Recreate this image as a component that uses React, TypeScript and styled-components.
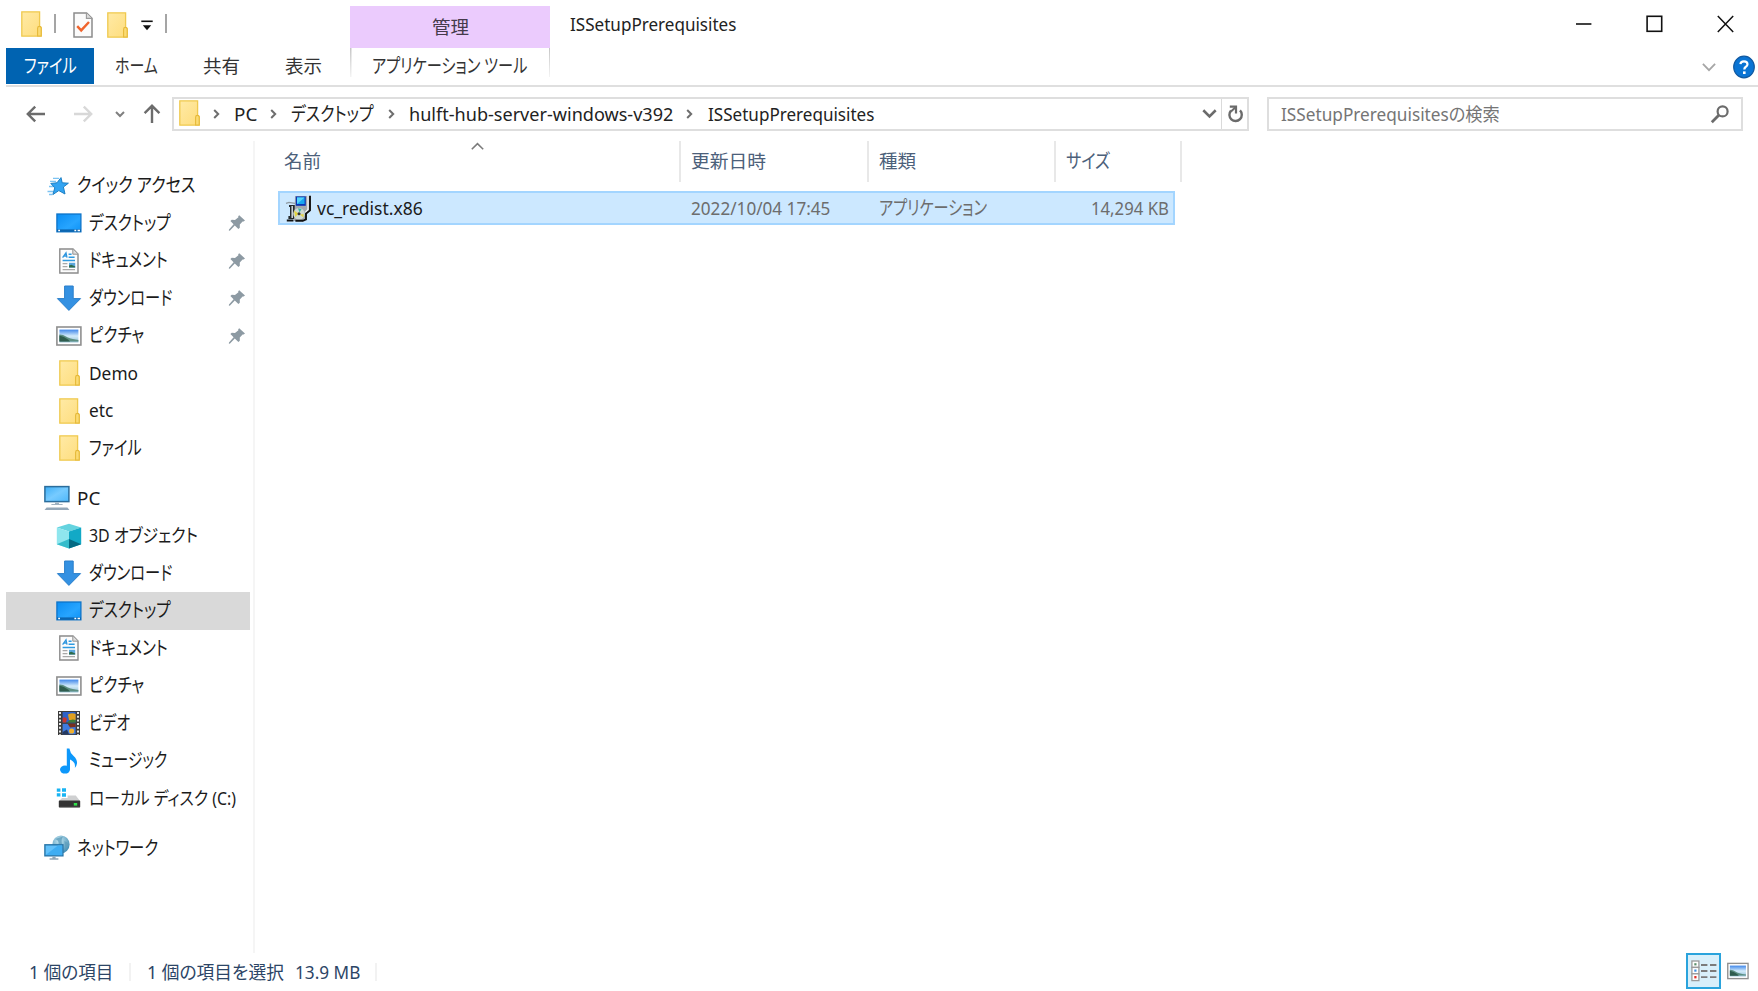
import React, { useLayoutEffect, useRef, useState } from "react";
import styled, { createGlobalStyle, css } from "styled-components";

const GlobalStyle = createGlobalStyle`
  * { box-sizing: border-box; }
  html, body { margin: 0; padding: 0; background: #fff; overflow: hidden; }
  body {
    font-family: "Noto Sans", "Noto Sans CJK JP", sans-serif;
    font-size: 18px;
    font-feature-settings: "palt" 1;
    color: #1b1b1b;
  }
  svg { display: block; flex: none; }
`;

/* ---------- text condensed to a UI-font width ---------- */

const LabelBox = styled.span<{ $w: number; $size: number; $color?: string }>`
  display: inline-block;
  flex: none;
  width: ${(p) => p.$w}px;
  height: 26px;
  line-height: 26px;
  font-size: ${(p) => p.$size}px;
  white-space: pre;
  color: ${(p) => p.$color ?? "inherit"};
`;
const LabelInk = styled.span`
  display: inline-block;
  transform-origin: 0 50%;
`;

/* Katakana-only labels are set taller, as narrow UI kana are. */
const KATAKANA = /^[\u30a0-\u30ff ]+$/;

function Label({ text, w, color }: { text: string; w: number; color?: string }) {
  const ref = useRef<HTMLSpanElement>(null);
  const [scale, setScale] = useState(1);
  useLayoutEffect(() => {
    if (ref.current) setScale(w / ref.current.offsetWidth);
  }, [text, w]);
  return (
    <LabelBox $w={w} $size={KATAKANA.test(text) ? 19.5 : 18} $color={color}>
      <LabelInk ref={ref} style={{ transform: `scaleX(${scale})` }}>{text}</LabelInk>
    </LabelBox>
  );
}

/* ---------- icons ---------- */

const FolderIcon = () => (
  <svg width="21" height="26" viewBox="0 0 21 26">
    <defs>
      <linearGradient id="folder" x1="0" y1="0" x2="1" y2="1">
        <stop offset="0" stopColor="#ffeaa6" />
        <stop offset="1" stopColor="#fedd7c" />
      </linearGradient>
    </defs>
    <path d="M.8.8H18.6V15.2L20.2 16.6V25.2H.8Z" fill="url(#folder)" stroke="#efc94f" strokeWidth="1.3" />
    <path d="M16.6 25V17.2Q16.6 15.4 18.4 15.4T20.2 17.2V25Z" fill="#fbdb74" stroke="#e6b93a" strokeWidth="1.1" />
  </svg>
);

const PropertiesIcon = () => (
  <svg width="20" height="26" viewBox="0 0 20 26">
    <path d="M1 1H13.6L19 6.2V25H1Z" fill="#fbfbfb" stroke="#8c8c8c" strokeWidth="1.5" />
    <path d="M13.4 1V6.4H19" fill="#dcdcdc" stroke="#9a9a9a" strokeWidth="1.1" />
    <path d="M4.2 14.2L8.2 18.4L16 10" fill="none" stroke="#f0642d" strokeWidth="2.4" />
  </svg>
);

const CustomizeIcon = () => (
  <svg width="12" height="11" viewBox="0 0 12 11">
    <path d="M.3 1.3H11.7" stroke="#111" strokeWidth="1.6" />
    <path d="M1.8 5.2H10.2L6 10.2Z" fill="#111" />
  </svg>
);

const MinimizeIcon = () => (
  <svg width="17" height="18" viewBox="0 0 17 18"><path d="M1 9H16.4" stroke="#111" strokeWidth="1.6" /></svg>
);
const MaximizeIcon = () => (
  <svg width="17" height="18" viewBox="0 0 17 18"><rect x="1.1" y="1.3" width="14.6" height="15" fill="none" stroke="#111" strokeWidth="1.6" /></svg>
);
const CloseIcon = () => (
  <svg width="17" height="18" viewBox="0 0 17 18"><path d="M.8 1L16.2 17M16.2 1L.8 17" stroke="#111" strokeWidth="1.5" /></svg>
);

const ChevronIcon = ({ w, h, color, sw }: { w: number; h: number; color: string; sw: number }) => (
  <svg width={w} height={h} viewBox={`0 0 ${w} ${h}`}>
    <path d={`M${sw / 2} ${sw / 2}L${w / 2} ${h - sw}L${w - sw / 2} ${sw / 2}`} fill="none" stroke={color} strokeWidth={sw} />
  </svg>
);

const CrumbChevron = () => (
  <svg width="8" height="12" viewBox="0 0 8 12"><path d="M1.2 2L5.2 6L1.2 10" fill="none" stroke="#6e6e6e" strokeWidth="2" /></svg>
);

const HelpIcon = () => (
  <svg width="22" height="24" viewBox="0 0 22 24">
    <ellipse cx="11" cy="12" rx="10.3" ry="10.8" fill="#0a74d4" stroke="#1159a0" strokeWidth="1.2" />
    <path d="M7.4 9.2Q7.6 6.3 11 6.3T14.5 9.2Q14.5 10.8 12.6 12Q11.3 12.9 11.3 14.6" fill="none" stroke="#fff" strokeWidth="2.2" />
    <rect x="10" y="16.4" width="2.6" height="2.6" fill="#fff" />
  </svg>
);

const ArrowIcon = ({ dir, color }: { dir: "left" | "right" | "up"; color: string }) => (
  <svg width="20" height="20" viewBox="0 0 20 20">
    <g transform={`rotate(${{ left: 0, up: 90, right: 180 }[dir]} 10 10)`}>
      <path d="M1.8 10H19M9.2 2.6L1.8 10L9.2 17.4" fill="none" stroke={color} strokeWidth="2.4" />
    </g>
  </svg>
);

const RefreshIcon = () => (
  <svg width="17" height="20" viewBox="0 0 17 20">
    <path d="M13 6.4A6.2 6.2 0 1 1 4 6.6" fill="none" stroke="#6b6b6b" strokeWidth="2.4" />
    <path d="M2.8 2.6H9V9.4" fill="none" stroke="#6b6b6b" strokeWidth="2.2" />
    <path d="M4 7.4L8.8 3" stroke="#6b6b6b" strokeWidth="2" />
  </svg>
);

const SearchIcon = () => (
  <svg width="20" height="20" viewBox="0 0 20 20">
    <circle cx="12.6" cy="7.4" r="5" fill="none" stroke="#6b6b6b" strokeWidth="2.2" />
    <path d="M9 11L1.8 18.2" stroke="#6b6b6b" strokeWidth="2.8" />
  </svg>
);

const StarIcon = () => (
  <svg width="26" height="26" viewBox="0 0 26 26">
    <path d="M9 5.4H15M6 8.4H12M5 13.5H10M3.5 18.5H9M5 21.5H8" stroke="#7cc3f2" strokeWidth="1.3" />
    <path d="M17 4.6L18.2 9.8L24.4 10.2L19.4 14L21 21L14.8 17.6L8.8 21.6L10.8 14.8L6.8 10.4L13 9.8Z" fill="#32a4f2" stroke="#1c7fc4" strokeWidth="1" />
  </svg>
);

const DesktopIcon = () => (
  <svg width="26" height="26" viewBox="0 0 26 26">
    <defs>
      <linearGradient id="desk" x1="0" y1="0" x2="1" y2="1">
        <stop offset="0" stopColor="#0b8df2" />
        <stop offset=".6" stopColor="#27a5ff" />
        <stop offset="1" stopColor="#0c91f5" />
      </linearGradient>
    </defs>
    <rect x=".9" y="4" width="24" height="17.8" fill="url(#desk)" stroke="#0f74c8" strokeWidth="1.3" />
    <rect x="1" y="19.4" width="24" height="2.4" fill="#0c66b0" />
    <path d="M2.2 20.6H4M18.4 20.6H20.2M21.6 20.6H24" stroke="#fff" strokeWidth="1.5" />
  </svg>
);

const DocumentIcon = () => (
  <svg width="26" height="26" viewBox="0 0 26 26">
    <path d="M3.8 1H17L22 6V25H3.8Z" fill="#fcfcfc" stroke="#8b8b8b" strokeWidth="1.4" />
    <path d="M16.8 1V6.2H22" fill="#dedede" stroke="#949494" strokeWidth="1" />
    <path d="M6.6 9.6L10 4.8L11 9.6M8 8H11" fill="none" stroke="#2f96de" strokeWidth="1.3" />
    <path d="M12.6 6.2H15.6M12.6 9.2H18.6M6.6 12.4H19" stroke="#2f9ae0" strokeWidth="1.5" />
    <path d="M6.6 15.6H11.4M6.6 18.6H11.4M6.6 21.6H19" stroke="#a8a8a8" strokeWidth="1.2" />
    <rect x="13" y="14.8" width="6.2" height="4.8" fill="#5aa6dc" />
    <path d="M13 19.6V17.4L15.4 16.8L19.2 18.4V19.6Z" fill="#2f6b4a" />
  </svg>
);

const DownloadIcon = () => (
  <svg width="26" height="26" viewBox="0 0 26 26">
    <path d="M8.6 1H17.2V13.6H24.6L12.9 25.4L1.4 13.6H8.6Z" fill="#3491e2" stroke="#2b7fcb" strokeWidth="1" />
  </svg>
);

const PictureIcon = ({ w = 26, h = 26 }: { w?: number; h?: number }) => (
  <svg width={w} height={h} viewBox="0 3 26 20" preserveAspectRatio="xMidYMid meet">
    <defs>
      <linearGradient id="sky" x1="0" y1="0" x2="0" y2="1">
        <stop offset="0" stopColor="#3f86ea" />
        <stop offset=".5" stopColor="#d3ebfa" />
        <stop offset="1" stopColor="#8fbdd6" />
      </linearGradient>
    </defs>
    <rect x=".9" y="4" width="24" height="18" fill="#fff" stroke="#8f8f8f" strokeWidth="1.6" />
    <rect x="3.4" y="6.6" width="19" height="12.8" fill="url(#sky)" />
    <path d="M3.4 11.4Q7 11.2 10 13.6T22.4 17V18.4H3.4Z" fill="#5d8f82" />
    <path d="M3.4 12.6Q8 13.6 12 16.6L14 18.6H3.4Z" fill="#2f5c4e" />
  </svg>
);

const ComputerIcon = () => (
  <svg width="26" height="26" viewBox="0 0 26 26">
    <defs>
      <linearGradient id="screen" x1="0" y1="0" x2="1" y2="1">
        <stop offset="0" stopColor="#3daef6" />
        <stop offset=".5" stopColor="#77cbff" />
        <stop offset="1" stopColor="#4db7fa" />
      </linearGradient>
    </defs>
    <rect x=".9" y="1.6" width="24" height="15" fill="url(#screen)" stroke="#2b6d9c" strokeWidth="1.5" />
    <path d="M11 17.4H15V19H18.6V20H7.4V19H11Z" fill="#9fb1bf" />
    <path d="M2.6 22.4H23.4L25.4 25H.6Z" fill="#94a7b8" />
  </svg>
);

const CubeIcon = () => (
  <svg width="26" height="26" viewBox="0 0 26 26">
    <path d="M13 .8L25.2 4.6L13 8.6L.8 4.6Z" fill="#64d3df" />
    <path d="M.8 4.6L13 8.6V25.4L.8 21.2Z" fill="#8fe6ee" />
    <path d="M.8 21.2L13 16V25.4Z" fill="#35bccb" />
    <path d="M25.2 4.6L13 8.6V25.4L25.2 21.2Z" fill="#12a9c6" />
    <path d="M25.2 21.2L13 16V25.4Z" fill="#046a83" />
  </svg>
);

const VideoIcon = () => (
  <svg width="26" height="26" viewBox="0 0 26 26">
    <rect x="2" y="1" width="22" height="24" fill="#3c3c3c" />
    <path d="M4 2V25M22 2V25" stroke="#e8e8e8" strokeWidth="2" strokeDasharray="2 1.7" />
    <rect x="6.6" y="2" width="13" height="10.4" fill="#2f62c8" />
    <rect x="6.6" y="13.8" width="13" height="10.4" fill="#3f7be0" />
    <path d="M6.6 8Q9 6 11 9L10 12.4H6.6Z" fill="#c8362e" />
    <path d="M12 4.6Q16 2 19.6 4V10H13Z" fill="#e0a020" />
    <path d="M11 12.4Q15 8 19.6 10V12.4Z" fill="#3e7c35" />
    <path d="M11.6 13.8H19.6V17L14 17.4Z" fill="#7a2e1c" />
    <circle cx="15.6" cy="21" r="2.6" fill="#f0b030" />
    <path d="M6.6 22L11 19.6L13 24.2H6.6Z" fill="#243a63" />
  </svg>
);

const MusicIcon = () => (
  <svg width="26" height="26" viewBox="0 0 26 26">
    <ellipse cx="9" cy="21.6" rx="5" ry="4" fill="#0d98fb" />
    <path d="M10.8 .6H13.4Q14 5 17.6 8Q21.4 11.4 21 15.6Q20.6 18.4 18.8 20Q19.6 15.6 17 13.4Q15.4 11.8 14 11.4V21.6H10.8Z" fill="#0d98fb" />
  </svg>
);

const DriveIcon = () => (
  <svg width="26" height="26" viewBox="0 0 26 26">
    <path d="M.8 3.4H4.4V6.8H.8ZM6 3.2H10V6.8H6ZM.8 8.2H4.4V11.6H.8ZM6 8.2H10V11.8H6Z" fill="#18b4f3" />
    <path d="M11.6 10.4H19.8L24 16H3L6 13H11.6Z" fill="#cfd0d1" />
    <rect x="2.8" y="15.6" width="21.4" height="7" rx=".8" fill="#333" />
    <path d="M3.6 22.4H23.6" stroke="#8b8b8b" />
    <rect x="17.8" y="18" width="3.4" height="2.6" fill="#31e24b" />
  </svg>
);

const NetworkIcon = () => (
  <svg width="26" height="26" viewBox="0 0 26 26">
    <defs>
      <radialGradient id="globe" cx=".4" cy=".3" r=".8">
        <stop offset="0" stopColor="#c3e6f2" />
        <stop offset="1" stopColor="#3482ab" />
      </radialGradient>
    </defs>
    <ellipse cx="17" cy="9.4" rx="8.6" ry="9" fill="url(#globe)" />
    <path d="M11 4Q15 5 14.6 9H18Q17 4 19 1.4M20.4 6Q24 7 25 10L21 15Z" fill="#5f9dbb" opacity=".8" />
    <rect x=".9" y="9.8" width="18" height="11" fill="#62c1fa" stroke="#2775a8" strokeWidth="1.4" />
    <path d="M1.6 20L14 10.4H18.2V20.2Z" fill="#3fadf2" />
    <path d="M8.4 21.4H11.6V23.2H14.4V24.8H5.6V23.2H8.4Z" fill="#90a5b5" />
  </svg>
);

const PinIcon = () => (
  <svg width="18" height="18" viewBox="0 0 18 18">
    <path d="M11.2 1.2L17 6.4L15.6 7.6L14.6 7.4L11.8 10.6L11.8 13.8L10.4 15L6.8 11.4L1.8 16.8L.8 16.6L1 15.4L5.6 10.2L2.4 7L3.8 5.8L7 6L10.4 3.2L10.2 2.2Z" fill="#8d9aa3" />
  </svg>
);

const InstallerIcon = () => (
  <svg width="27" height="27" viewBox="0 0 27 27">
    <path d="M1 8.4L4 7.4L10 8.4" fill="none" stroke="#8f9aa2" strokeWidth="1.4" />
    <path d="M4 10H11V24H3.4V21H5V12H4Z" fill="#23282b" />
    <path d="M7.2 11V23" stroke="#cfd8de" strokeWidth="1.5" />
    <path d="M10 1H25.4V16L21 20V24.6L18 26H8.4L9.4 22Z" fill="#a3a9ae" />
    <rect x="10.8" y="1.4" width="10" height="9.4" fill="#0b35b5" />
    <path d="M12 2.4H19.6V9H12Z" fill="#18a6f0" />
    <path d="M12 9L19.6 2.4H12Z" fill="#54d4fb" />
    <path d="M23 1V14.6L20.4 17.4" fill="none" stroke="#f2f4f5" strokeWidth="1.4" />
    <path d="M25 .8V15.4L21 18.6V24.4L17.6 26" fill="none" stroke="#111" strokeWidth="1.9" />
    <ellipse cx="14" cy="18.8" rx="5.8" ry="5.8" fill="#cfd8d2" />
    <path d="M9 15.6L13.4 18.6L10.4 22Z" fill="#e3d43e" />
    <path d="M14.6 19.4L18.6 19V22.4Z" fill="#e3d24a" />
    <path d="M13 13.2L16.6 14L14.6 17.4Z" fill="#36b9a5" />
    <circle cx="14" cy="18.8" r="1.5" fill="#333" />
    <path d="M1.8 25.4H8.4M10.4 25.8H18" stroke="#111" strokeWidth="2" />
  </svg>
);

const DetailsIcon = () => (
  <svg width="26" height="22" viewBox="0 0 26 22">
    <g fill="#fff" stroke="#9a9a9a" strokeWidth="1.3">
      <rect x=".9" y="1" width="7" height="6.4" />
      <rect x=".9" y="7.4" width="7" height="6.4" />
      <rect x=".9" y="13.8" width="7" height="6.8" />
    </g>
    <rect x="3.3" y="3.2" width="2.2" height="2.2" fill="#5a8f6c" />
    <rect x="3.3" y="9.5" width="2.2" height="2.2" fill="#3a8ee0" />
    <rect x="3.3" y="16" width="2.2" height="2.4" fill="#e02f26" />
    <path d="M10 5H16.4M19 5H25.4M10 11H16.4M19 11H25.4M10 17.2H16.4M19 17.2H25.4" stroke="#7b7b7b" strokeWidth="1.8" />
  </svg>
);

/* ---------- window frame ---------- */

const Window = styled.div`
  width: 1758px;
  height: 991px;
  display: flex;
  flex-direction: column;
  background: #fff;
`;

const Header = styled.header`
  display: flex;
  height: 87px;
  flex: none;
  margin-left: 6px;
  border-bottom: 2px solid #dfdfdf;
`;
const HeaderLeft = styled.div`
  width: 344px;
  display: flex;
  flex-direction: column;
`;
const QuickBar = styled.div`
  height: 48px;
  padding: 2px 0 0 15px;
  display: flex;
  align-items: center;
`;
const HomeFolder = styled.span`
  margin-bottom: 2px;
`;
const QuickDivider = styled.span<{ $before: number; $after: number }>`
  width: 2px;
  height: 19px;
  margin: 0 ${(p) => p.$after}px 4px ${(p) => p.$before}px;
  background: #a5a5a5;
`;
const QuickGap = styled.span<{ $w: number }>`
  width: ${(p) => p.$w}px;
`;
const Tabs = styled.nav`
  display: flex;
  height: 36px;
`;
const Tab = styled.div<{ $w: number; $active?: boolean }>`
  width: ${(p) => p.$w}px;
  display: flex;
  justify-content: center;
  align-items: center;
  color: #333;
  ${(p) => p.$active && css`background: #0063b1; color: #fff;`}
`;
const ContextGroup = styled.div`
  width: 200px;
  display: flex;
  flex-direction: column;
  padding-top: 6px;
`;
const ContextTitle = styled.div`
  height: 42px;
  display: flex;
  align-items: center;
  justify-content: center;
  background: #ebcbfd;
  color: #453a4b;
`;
const ContextTab = styled.div`
  height: 29px;
  padding: 5px 0 0 22px;
  background:
    linear-gradient(#c6c6c6, #f4f4f4) left / 1.5px 100% no-repeat,
    linear-gradient(#c6c6c6, #f4f4f4) right / 1.5px 100% no-repeat;
  color: #333;
`;
const HeaderRight = styled.div`
  flex: 1;
  display: flex;
  flex-direction: column;
`;
const TitleRow = styled.div`
  height: 48px;
  display: flex;
  align-items: center;
  padding: 0 24px 0 20px;
`;
const WindowButtons = styled.div`
  margin-left: auto;
  display: flex;
  gap: 54px;
`;
const RibbonTools = styled.div`
  flex: 1;
  display: flex;
  justify-content: flex-end;
  align-items: center;
  gap: 17px;
  padding: 1px 3px 0 0;
`;

/* ---------- navigation bar ---------- */

const NavBar = styled.div`
  height: 54px;
  flex: none;
  display: flex;
  align-items: center;
  padding: 0 15px 0 26px;
`;
const NavButtons = styled.div`
  width: 146px;
  display: flex;
  align-items: center;
`;
const NavSlot = styled.span<{ $w: number }>`
  width: ${(p) => p.$w}px;
  flex: none;
`;
const AddressBox = styled.div`
  width: 1077px;
  height: 34px;
  display: flex;
  align-items: center;
  border: 2px solid #dedede;
  padding-left: 6px;
`;
const AddressFolder = styled.span`
  margin: 0 1px 2px -1px;
`;
const Crumb = styled.span<{ $gap: number }>`
  display: flex;
  align-items: center;
  margin-left: ${(p) => p.$gap}px;
  color: #222;
`;
const CrumbText = styled.span<{ $gap: number }>`
  display: flex;
  margin: 0 0 1px ${(p) => p.$gap}px;
`;
const AddressTools = styled.div`
  margin-left: auto;
  height: 100%;
  display: flex;
  align-items: center;
`;
const RefreshCell = styled.span`
  width: 26px;
  height: 100%;
  margin-left: 4px;
  border-left: 1.5px solid #dadada;
  display: flex;
  align-items: center;
  justify-content: center;
  padding-left: 2px;
`;
const SearchBox = styled.div`
  flex: 1;
  height: 34px;
  margin-left: 18px;
  border: 2px solid #dedede;
  padding: 0 11px 0 12px;
  display: flex;
  align-items: center;
  justify-content: space-between;
`;

/* ---------- body ---------- */

const Body = styled.div`
  height: 812px;
  flex: none;
  display: flex;
`;
const Sidebar = styled.aside`
  width: 255px;
  padding: 26px 3px 0 6px;
  border-right: 2px solid #f5f5f5;
`;
const TreeGroup = styled.div`
  margin-bottom: 12.5px;
`;
const TreeRow = styled.div<{ $root?: boolean; $selected?: boolean }>`
  height: 37.5px;
  display: flex;
  align-items: center;
  gap: 7px;
  padding: 0 4px 0 ${(p) => (p.$root ? 37.5 : 49.5)}px;
  background: ${(p) => (p.$selected ? "#d9d9d9" : "transparent")};

  & > ${LabelBox} {
    margin-bottom: 1px;
  }
`;
const PinSlot = styled.span`
  margin-left: auto;
`;

const FileArea = styled.main`
  flex: 1;
  padding-left: 23px;
`;
const Columns = styled.div`
  display: flex;
  height: 41px;
  color: #4c607a;
`;
const Column = styled.div<{ $w: number; $pad: number }>`
  position: relative;
  width: ${(p) => p.$w}px;
  padding: 7px 0 0 ${(p) => p.$pad}px;
  border-right: 2px solid #e8e8e8;
`;
const SortMark = styled.span`
  position: absolute;
  top: 1px;
  left: 193px;
  transform: rotate(180deg);
`;
const FileRow = styled.div`
  display: flex;
  align-items: center;
  width: 897px;
  height: 34px;
  margin-top: 9px;
  border: 2px solid #a3d5ff;
  background: #cce8ff;
  color: #6d6d6d;
`;
const Cell = styled.div<{ $w: number; $end?: boolean }>`
  width: ${(p) => p.$w}px;
  display: flex;
  align-items: center;
  gap: 5px;
  justify-content: ${(p) => (p.$end ? "flex-end" : "flex-start")};
  padding-left: ${(p) => (p.$end ? 0 : 5)}px;

  & > ${LabelBox} {
    margin-bottom: 1px;
  }
`;

/* ---------- status bar ---------- */

const StatusBar = styled.footer`
  height: 38px;
  flex: none;
  display: flex;
  align-items: center;
  padding-left: 29px;
  color: #2c4566;

  & > ${LabelBox} {
    margin-bottom: 1px;
  }
`;
const StatusDivider = styled.span<{ $before: number; $after: number }>`
  width: 2px;
  height: 18px;
  margin: 0 ${(p) => p.$after}px 0 ${(p) => p.$before}px;
  background: #f2f2f2;
`;
const StatusGap = styled.span`
  width: 11px;
`;
const ViewButtons = styled.div`
  margin-left: auto;
  display: flex;
  align-items: center;
  gap: 6px;
  padding: 0 9px 2px 0;
`;
const ActiveView = styled.div`
  width: 35px;
  height: 36px;
  display: flex;
  align-items: center;
  justify-content: center;
  border: 2px solid #2aa3dc;
  background: #d8effa;
`;

/* ---------- data ---------- */

type Item = { text: string; w: number; icon: React.ReactNode; pinned?: boolean; selected?: boolean };
type Group = { root: Item; items: Item[] };

const groups: Group[] = [
  {
    root: { text: "クイック アクセス", w: 118, icon: <StarIcon /> },
    items: [
      { text: "デスクトップ", w: 82, icon: <DesktopIcon />, pinned: true },
      { text: "ドキュメント", w: 79, icon: <DocumentIcon />, pinned: true },
      { text: "ダウンロード", w: 83, icon: <DownloadIcon />, pinned: true },
      { text: "ピクチャ", w: 55, icon: <PictureIcon />, pinned: true },
      { text: "Demo", w: 49, icon: <FolderSlot /> },
      { text: "etc", w: 24, icon: <FolderSlot /> },
      { text: "ファイル", w: 53, icon: <FolderSlot /> },
    ],
  },
  {
    root: { text: "PC", w: 23, icon: <ComputerIcon /> },
    items: [
      { text: "3D オブジェクト", w: 109, icon: <CubeIcon /> },
      { text: "ダウンロード", w: 83, icon: <DownloadIcon /> },
      { text: "デスクトップ", w: 82, icon: <DesktopIcon />, selected: true },
      { text: "ドキュメント", w: 79, icon: <DocumentIcon /> },
      { text: "ピクチャ", w: 55, icon: <PictureIcon /> },
      { text: "ビデオ", w: 41, icon: <VideoIcon /> },
      { text: "ミュージック", w: 78, icon: <MusicIcon /> },
      { text: "ローカル ディスク (C:)", w: 147, icon: <DriveIcon /> },
    ],
  },
  { root: { text: "ネットワーク", w: 81, icon: <NetworkIcon /> }, items: [] },
];

const FolderCell = styled.span`
  width: 26px;
  flex: none;
  padding-left: 3px;
`;
function FolderSlot() {
  return <FolderCell><FolderIcon /></FolderCell>;
}

const crumbs = [
  { text: "PC", w: 23, before: 12, after: 13 },
  { text: "デスクトップ", w: 83, before: 13, after: 13 },
  { text: "hulft-hub-server-windows-v392", w: 264, before: 14, after: 13 },
  { text: "ISSetupPrerequisites", w: 166, before: 13, after: 14 },
];

export default function App() {
  return (
    <>
      <GlobalStyle />
      <Window>
        <Header>
          <HeaderLeft>
            <QuickBar>
              <HomeFolder><FolderIcon /></HomeFolder>
              <QuickDivider $before={12} $after={17} />
              <PropertiesIcon />
              <QuickGap $w={14} />
              <FolderIcon />
              <QuickGap $w={13} />
              <CustomizeIcon />
              <QuickDivider $before={12} $after={0} />
            </QuickBar>
            <Tabs>
              <Tab $w={88} $active><Label text="ファイル" w={53} /></Tab>
              <Tab $w={85}><Label text="ホーム" w={43} /></Tab>
              <Tab $w={84}><Label text="共有" w={37} /></Tab>
              <Tab $w={81}><Label text="表示" w={37} /></Tab>
            </Tabs>
          </HeaderLeft>
          <ContextGroup>
            <ContextTitle><Label text="管理" w={37} /></ContextTitle>
            <ContextTab><Label text="アプリケーション ツール" w={155} /></ContextTab>
          </ContextGroup>
          <HeaderRight>
            <TitleRow>
              <Label text="ISSetupPrerequisites" w={166} color="#222" />
              <WindowButtons>
                <MinimizeIcon />
                <MaximizeIcon />
                <CloseIcon />
              </WindowButtons>
            </TitleRow>
            <RibbonTools>
              <ChevronIcon w={14} h={9} color="#a6a6a6" sw={1.8} />
              <HelpIcon />
            </RibbonTools>
          </HeaderRight>
        </Header>

        <NavBar>
          <NavButtons>
            <ArrowIcon dir="left" color="#6c6c6c" />
            <NavSlot $w={27} />
            <ArrowIcon dir="right" color="#d8d8d8" />
            <NavSlot $w={22} />
            <ChevronIcon w={10} h={7} color="#808080" sw={2} />
            <NavSlot $w={17} />
            <ArrowIcon dir="up" color="#6c6c6c" />
          </NavButtons>
          <AddressBox>
            <AddressFolder><FolderIcon /></AddressFolder>
            {crumbs.map((c) => (
              <Crumb key={c.text} $gap={c.before}>
                <CrumbChevron />
                <CrumbText $gap={c.after}><Label text={c.text} w={c.w} /></CrumbText>
              </Crumb>
            ))}
            <AddressTools>
              <ChevronIcon w={15} h={10} color="#6b6b6b" sw={2.6} />
              <RefreshCell><RefreshIcon /></RefreshCell>
            </AddressTools>
          </AddressBox>
          <SearchBox>
            <Label text="ISSetupPrerequisitesの検索" w={219} color="#757575" />
            <SearchIcon />
          </SearchBox>
        </NavBar>

        <Body>
          <Sidebar>
            {groups.map((g) => (
              <TreeGroup key={g.root.text}>
                <TreeRow $root>
                  {g.root.icon}
                  <Label text={g.root.text} w={g.root.w} />
                </TreeRow>
                {g.items.map((it) => (
                  <TreeRow key={it.text} $selected={it.selected}>
                    {it.icon}
                    <Label text={it.text} w={it.w} />
                    {it.pinned && <PinSlot><PinIcon /></PinSlot>}
                  </TreeRow>
                ))}
              </TreeGroup>
            ))}
          </Sidebar>
          <FileArea>
            <Columns>
              <Column $w={403} $pad={6}>
                <Label text="名前" w={37} />
                <SortMark><ChevronIcon w={13} h={8} color="#7b7b7b" sw={1.6} /></SortMark>
              </Column>
              <Column $w={188} $pad={10}><Label text="更新日時" w={75} /></Column>
              <Column $w={187} $pad={10}><Label text="種類" w={37} /></Column>
              <Column $w={126} $pad={10}><Label text="サイズ" w={44} /></Column>
            </Columns>
            <FileRow>
              <Cell $w={406}>
                <InstallerIcon />
                <Label text="vc_redist.x86" w={106} color="#1b1b1b" />
              </Cell>
              <Cell $w={188}><Label text="2022/10/04 17:45" w={139} /></Cell>
              <Cell $w={186}><Label text="アプリケーション" w={108} /></Cell>
              <Cell $w={109} $end><Label text="14,294 KB" w={78} /></Cell>
            </FileRow>
          </FileArea>
        </Body>

        <StatusBar>
          <Label text="1 個の項目" w={84} />
          <StatusDivider $before={16} $after={16} />
          <Label text="1 個の項目を選択" w={137} />
          <StatusGap />
          <Label text="13.9 MB" w={65} />
          <StatusDivider $before={15} $after={0} />
          <ViewButtons>
            <ActiveView><DetailsIcon /></ActiveView>
            <PictureIcon w={22} h={18} />
          </ViewButtons>
        </StatusBar>
      </Window>
    </>
  );
}
